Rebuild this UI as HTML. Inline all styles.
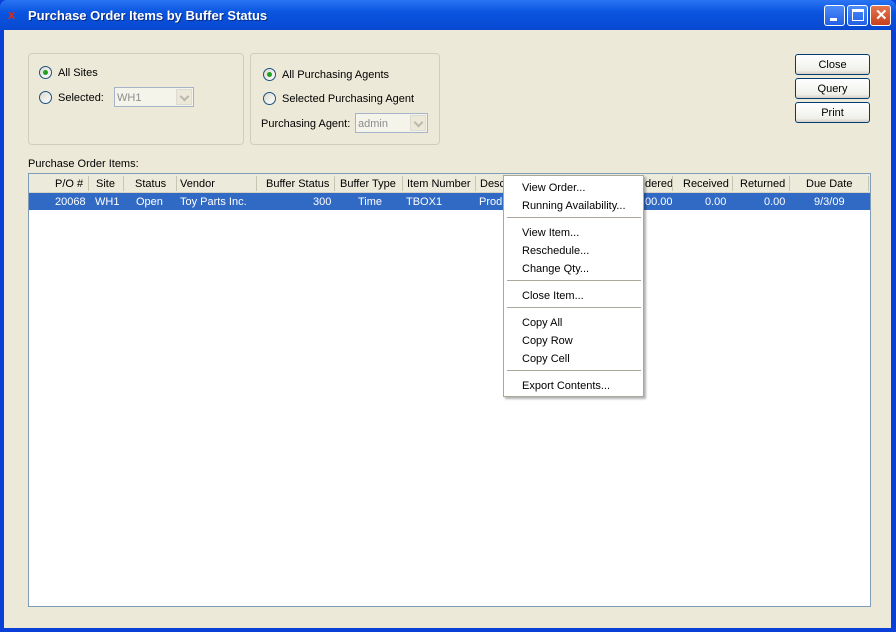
<!DOCTYPE html><html><head><style>
*{margin:0;padding:0;box-sizing:border-box}
body{width:896px;height:632px;overflow:hidden;font-family:"Liberation Sans",sans-serif;font-size:11px;background:#0a3fd8;position:relative}
.win{position:absolute;left:4px;top:30px;width:887px;height:598px;background:#ece9d8}
.title{position:absolute;left:0;top:0;width:896px;height:30px;background:linear-gradient(#2a74f4,#0a55e0 40%,#0848d0);border-radius:7px 7px 0 0}
.title span{position:absolute;left:28px;top:8px;color:#fff;font-weight:bold;font-size:13px;text-shadow:1px 1px #0a2a80}
.tb{position:absolute;top:5px;width:21px;height:21px;border:1px solid #fff;border-radius:3px;background:linear-gradient(#4b8cf8,#2360e6)}
.abs{position:absolute}
.grp{position:absolute;border:1px solid #d0cdbf;border-radius:4px}
.rad{position:absolute;width:13px;height:13px;border:1px solid #1c5180;border-radius:50%;background:linear-gradient(135deg,#dcd9cd,#fff)}
.rad.on::after{content:"";position:absolute;left:3px;top:3px;width:5px;height:5px;border-radius:50%;background:#21a121}
.t{position:absolute;white-space:nowrap;padding-top:1px}
.cb{position:absolute;height:20px;border:1px solid #a5b4c9;background:#f5f4ea;color:#8d8d8d;padding:4px 0 0 2px}
.cb i{position:absolute;right:1px;top:1px;width:16px;height:16px;background:#ece9d8;border:1px solid #dcdcd4}
.cb i::after{content:"";position:absolute;left:4px;top:3px;width:5px;height:5px;border-right:2px solid #b8b8b0;border-bottom:2px solid #b8b8b0;transform:rotate(45deg)}
.btn{position:absolute;left:795px;width:75px;height:21px;border:1px solid #003c74;border-radius:3px;background:linear-gradient(#fff,#f0f0ea 80%,#d6d0c5);text-align:center;padding-top:4px}
.tbl{position:absolute;left:28px;top:173px;width:843px;height:434px;border:1px solid #7f9db9;background:#fff}
.hd{position:absolute;left:0;top:0;width:841px;height:19px;background:#ebeadb;border-bottom:1px solid #d6d2c2}
.hd div{position:absolute;top:4px;white-space:nowrap}
.sep{position:absolute;top:2px;width:1px;height:15px;background:#c7c5b2}
.row{position:absolute;left:0;top:19px;width:841px;height:17px;background:#316ac5;color:#fff}
.row div{position:absolute;top:3px;white-space:nowrap}
.menu{position:absolute;left:503px;top:175px;width:141px;height:222px;background:#fff;border:1px solid #aca899;box-shadow:2px 2px 2px rgba(0,0,0,.3)}
.menu div{position:absolute;left:18px;white-space:nowrap;padding-top:1px}
.menu hr{position:absolute;left:3px;width:134px;border:0;border-top:1px solid #aca899}
</style></head><body>
<div class="title"><span>Purchase Order Items by Buffer Status</span>
<div class="abs" style="left:8px;top:7px;color:#d03020;font-weight:bold;font-size:13px">x</div>
<div class="tb" style="left:824px"><div class="abs" style="left:5px;top:12px;width:7px;height:3px;background:#fff"></div></div>
<div class="tb" style="left:847px"><div class="abs" style="left:4px;top:3px;width:12px;height:12px;border:1px solid #fff;border-top-width:3px"></div></div>
<div class="tb" style="left:870px;background:linear-gradient(#e6764f,#c8401c)"><div class="abs" style="left:4px;top:0px;color:#fff;font-size:15px;font-weight:bold">✕</div></div>
</div>
<div class="win"></div>
<div class="grp" style="left:28px;top:53px;width:216px;height:92px"></div>
<div class="grp" style="left:250px;top:53px;width:190px;height:92px"></div>
<div class="rad on" style="left:39px;top:66px"></div><div class="t" style="left:58px;top:66px">All Sites</div>
<div class="rad" style="left:39px;top:91px"></div><div class="t" style="left:58px;top:91px">Selected:</div>
<div class="cb" style="left:114px;top:87px;width:80px">WH1<i></i></div>
<div class="rad on" style="left:263px;top:68px"></div><div class="t" style="left:282px;top:68px">All Purchasing Agents</div>
<div class="rad" style="left:263px;top:92px"></div><div class="t" style="left:282px;top:92px">Selected Purchasing Agent</div>
<div class="t" style="left:261px;top:117px">Purchasing Agent:</div>
<div class="cb" style="left:355px;top:113px;width:73px">admin<i></i></div>
<div class="btn" style="top:54px">Close</div>
<div class="btn" style="top:78px">Query</div>
<div class="btn" style="top:102px">Print</div>
<div class="t" style="left:28px;top:157px">Purchase Order Items:</div>
<div class="tbl">
<div class="hd">
<div style="left:26px">P/O #</div><span class="sep" style="left:59px"></span>
<div style="left:67px">Site</div><span class="sep" style="left:94px"></span>
<div style="left:106px">Status</div><span class="sep" style="left:147px"></span>
<div style="left:151px">Vendor</div><span class="sep" style="left:227px"></span>
<div style="left:237px">Buffer Status</div><span class="sep" style="left:305px"></span>
<div style="left:311px">Buffer Type</div><span class="sep" style="left:373px"></span>
<div style="left:378px">Item Number</div><span class="sep" style="left:446px"></span>
<div style="left:451px">Desc</div>
<div style="left:616px">dered</div><span class="sep" style="left:643px"></span>
<div style="left:654px">Received</div><span class="sep" style="left:703px"></span>
<div style="left:711px">Returned</div><span class="sep" style="left:760px"></span>
<div style="left:777px">Due Date</div><span class="sep" style="left:839px"></span>
</div>
<div class="row">
<div style="left:26px">20068</div><div style="left:66px">WH1</div><div style="left:107px">Open</div><div style="left:151px">Toy Parts Inc.</div>
<div style="left:284px">300</div><div style="left:329px">Time</div><div style="left:377px">TBOX1</div><div style="left:450px">Prod</div>
<div style="left:616px">00.00</div><div style="left:676px">0.00</div><div style="left:735px">0.00</div><div style="left:785px">9/3/09</div>
</div>
</div>
<div class="menu">
<div style="top:5px">View Order...</div>
<div style="top:23px">Running Availability...</div>
<hr style="top:41px">
<div style="top:50px">View Item...</div>
<div style="top:68px">Reschedule...</div>
<div style="top:86px">Change Qty...</div>
<hr style="top:104px">
<div style="top:113px">Close Item...</div>
<hr style="top:131px">
<div style="top:140px">Copy All</div>
<div style="top:158px">Copy Row</div>
<div style="top:176px">Copy Cell</div>
<hr style="top:194px">
<div style="top:203px">Export Contents...</div>
</div>
</body></html>
